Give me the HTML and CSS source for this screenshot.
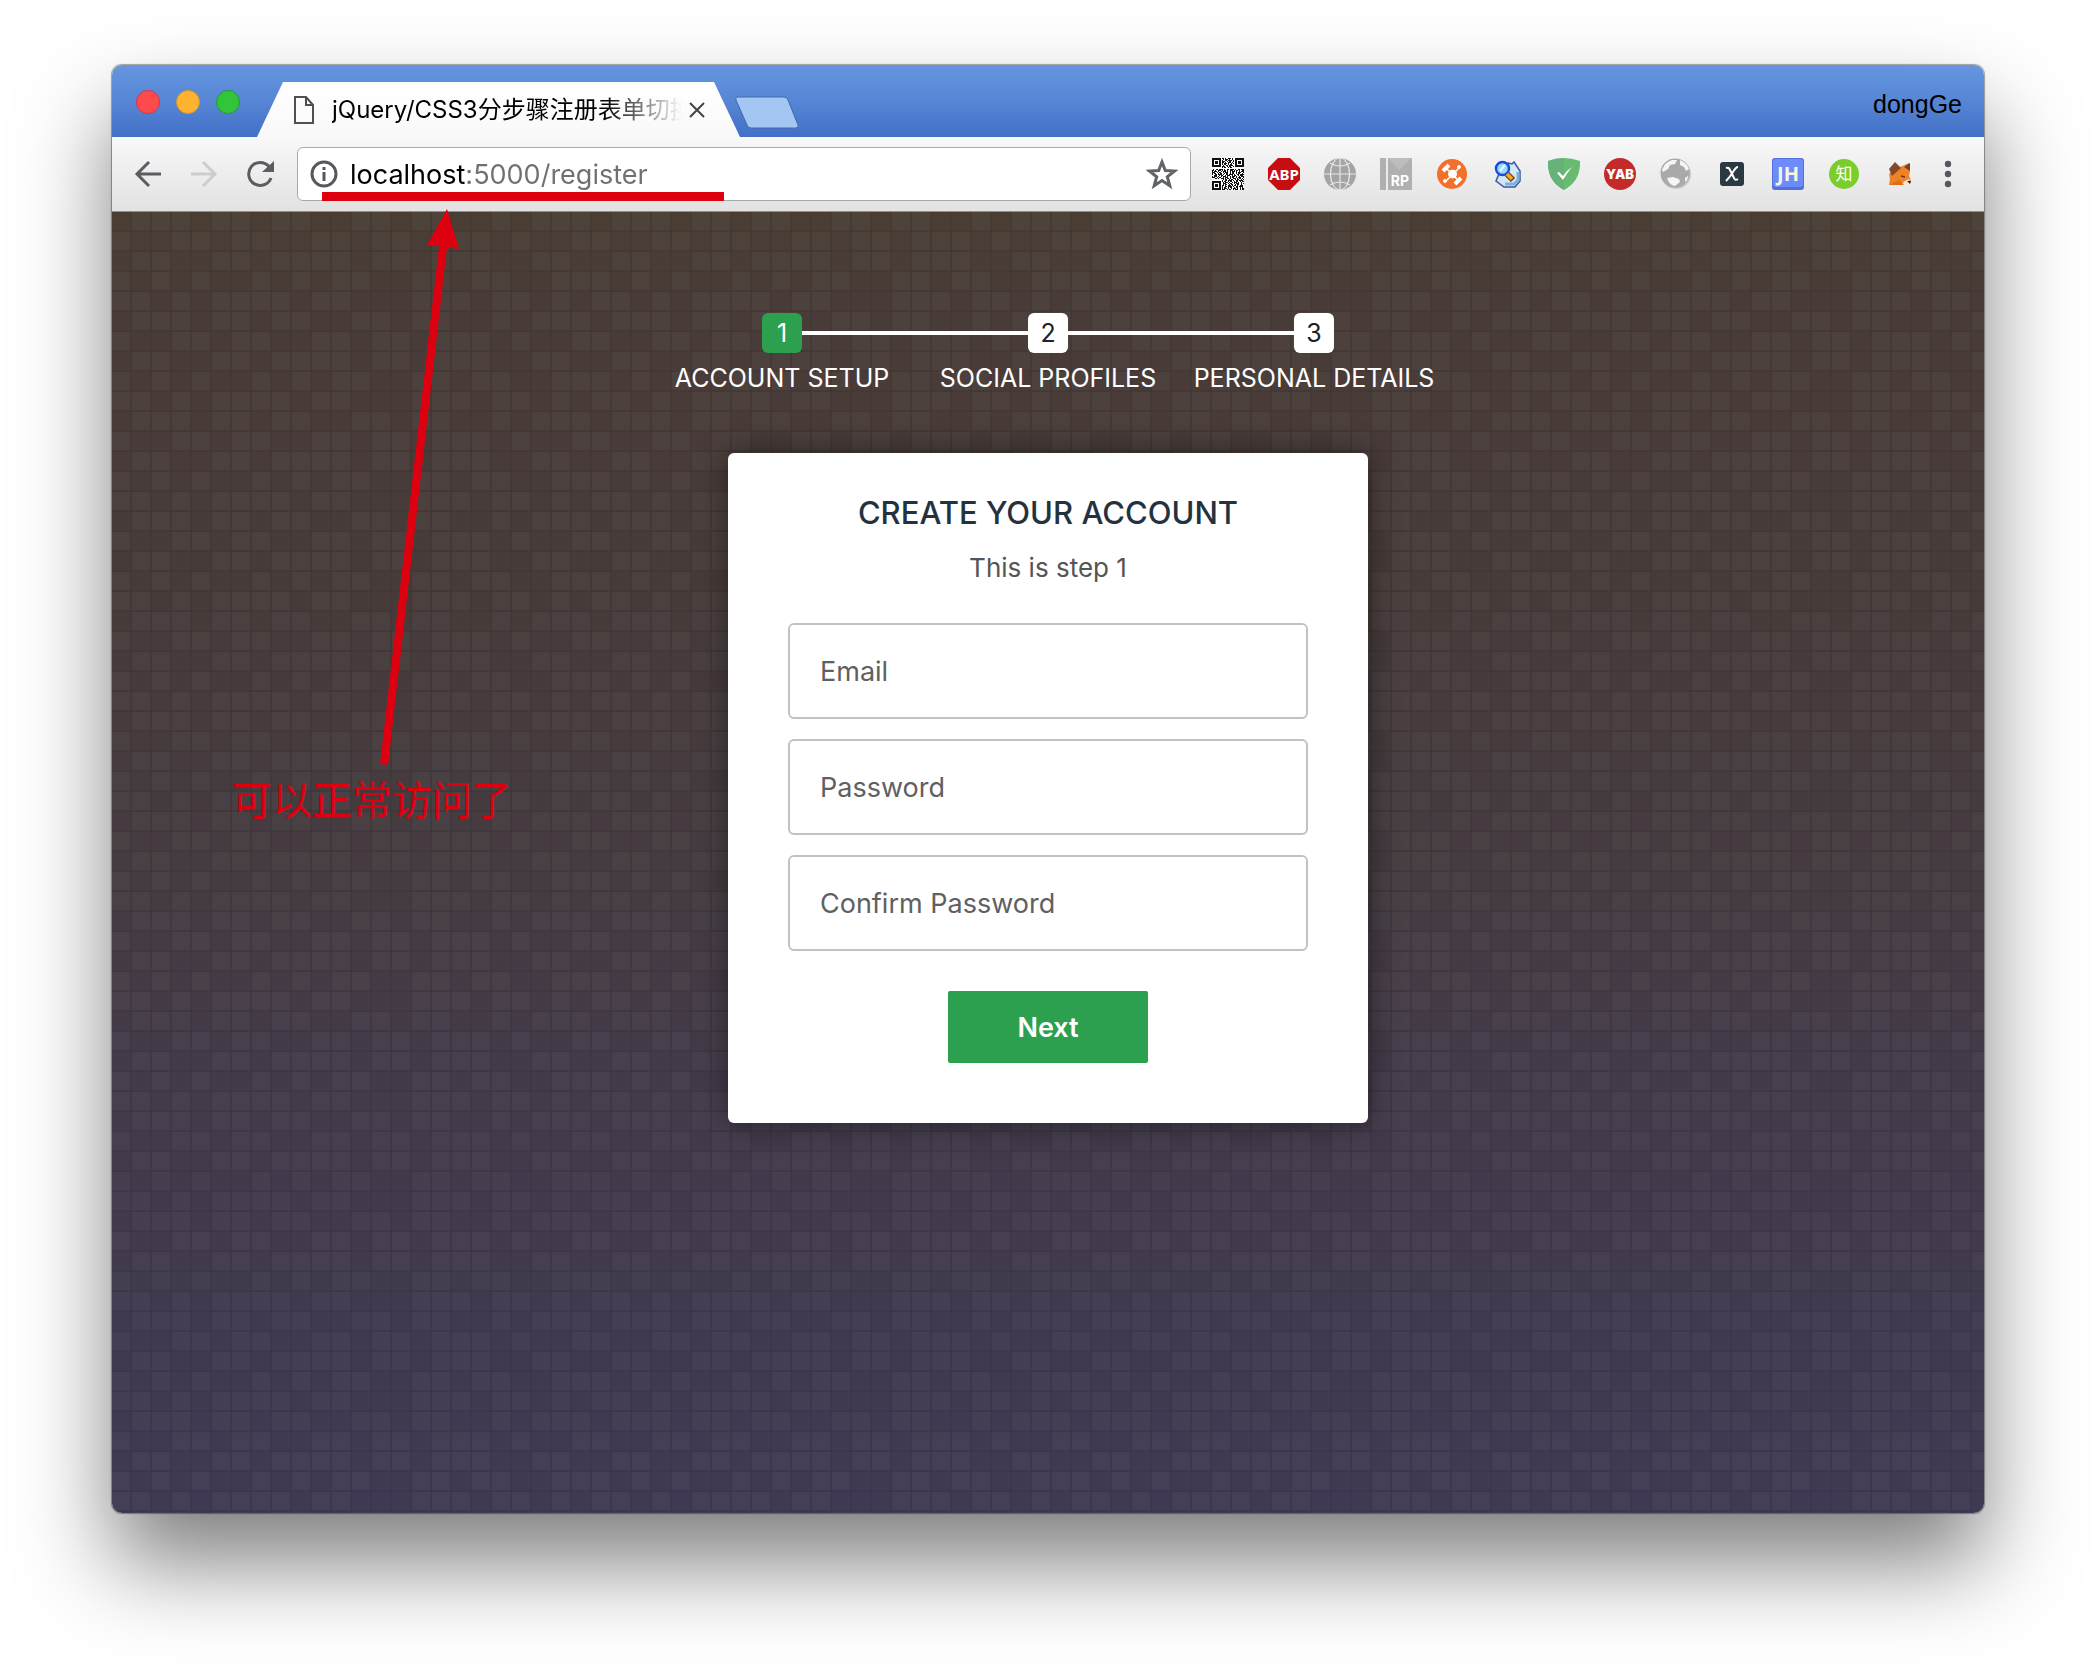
FILE: index.html
```html
<!DOCTYPE html>
<html lang="zh-CN">
<head>
<meta charset="utf-8">
<title>jQuery/CSS3分步骤注册表单切换</title>
<link rel="stylesheet" href="styles.css">
</head>
<body>
<div class="window">
  <header class="titlebar">
    <div class="lights">
      <button class="light light-close" aria-label="Close window"></button>
      <button class="light light-min" aria-label="Minimize window"></button>
      <button class="light light-max" aria-label="Zoom window"></button>
    </div>
    <div class="tab">
      <svg class="tab-icon" width="20" height="28" viewBox="0 0 20 28" fill="none" stroke="#505050" stroke-width="2"><path d="M1 1h11l7 8v18H1zM12 1v8h7"/></svg>
      <span class="tab-title">jQuery/CSS3分步骤注册表单切换</span>
      <button class="tab-close" aria-label="Close tab"><svg width="16" height="16" viewBox="0 0 16 16" stroke="#444" stroke-width="2"><path d="M1 1l14 14M15 1L1 15"/></svg></button>
    </div>
    <button class="new-tab" aria-label="New tab"><svg width="66" height="34" viewBox="0 0 66 34"><path d="M3 1h47q3 0 4 3l10 25q1 3-2 3H17q-3 0-4-3L2 4q-1-3 1-3z" fill="#a3c7f2" stroke="#4069ab"/></svg></button>
    <span class="profile">dongGe</span>
  </header>

  <nav class="toolbar">
    <div class="nav-buttons">
      <button class="icon" aria-label="Back"><svg width="32" height="32" viewBox="0 0 32 32" fill="none" stroke="#5a5d61" stroke-width="3"><path d="M29 16H7M17 4L5 16l12 12"/></svg></button>
      <button class="icon" aria-label="Forward"><svg width="32" height="32" viewBox="0 0 32 32" fill="none" stroke="#cdcdcd" stroke-width="3"><path d="M3 16h22M15 4l12 12-12 12"/></svg></button>
      <button class="icon" aria-label="Reload"><svg width="32" height="32" viewBox="0 0 32 32" fill="none" stroke="#5a5d61" stroke-width="3"><path d="M27 20A11.500 11.500 0 1 1 25 8.500"/><path d="M30 3v11H18z" fill="#5a5d61" stroke="none"/></svg></button>
    </div>
    <div class="omnibox">
      <svg width="28" height="28" viewBox="0 0 28 28" fill="none" stroke="#55585c" stroke-width="3"><circle cx="14" cy="14" r="12"/><path d="M14 12v9M14 7v3"/></svg>
      <input class="url" type="text" aria-label="Address" value="localhost:5000/register">
      <button class="star" aria-label="Bookmark this page"><svg width="32" height="32" viewBox="0 0 32 32"><path d="M16 4l3.300 8.500 9.200.500-7.200 5.700 2.500 9L16 22.600l-7.800 5.100 2.500-9L3.500 13l9.200-.500z" fill="none" stroke="#5f6266" stroke-width="3"/></svg></button>
    </div>
    <div class="extensions">
      <button class="icon" aria-label="QR code"><svg width="32" height="32" viewBox="0 0 32 32"><path fill="#fff" d="M0 0h32v32H0z"/><g stroke="#111" stroke-width="1"><path stroke-dasharray="2 1 1 2 3 1 1 1" d="M10 .5h12M10 4.500h12M0 12.500h32M3 20.500h29M10 27.500h22"/><path stroke-dasharray="1 1 3 1 1 2" d="M11 1.500h10M10 5.500h12M0 13.500h32M0 18.500h32M11 24.500h20M10 30.500h22"/><path stroke-dasharray="1 2 2 1 4 1" d="M10 2.500h12M11 7.500h11M1 11.500h31M0 16.500h32M10 22.500h22M10 28.500h22"/><path stroke-dasharray="3 2 1 1 2 2 1 1" d="M10 3.500h12M10 8.500h12M0 14.500h32M2 17.500h30M0 19.500h32M11 25.500h21M10 31.500h22"/><path stroke-dasharray="1 1 2 2" d="M10 6.500h12M10 9.500h12M0 15.500h32M11 21.500h21M10 23.500h22M11 26.500h20M10 29.500h21"/></g><g fill="none" stroke="#111" stroke-width="2"><path d="M1 1h7v7H1zM24 1h7v7h-7zM1 24h7v7H1z"/></g><path fill="#111" d="M3 3h3v3H3zM26 3h3v3h-3zM3 26h3v3H3z"/></svg></button>
      <button class="icon" aria-label="Adblock Plus"><svg width="32" height="32" viewBox="0 0 32 32"><path d="M10 0h12l10 10v12L22 32H10L0 22V10z" fill="#c70d12"/><text x="16" y="22" class="glyph glyph-abp">ABP</text></svg></button>
      <button class="icon" aria-label="Globe"><svg width="32" height="32" viewBox="0 0 32 32"><circle cx="16" cy="16" r="16" fill="#a4a4a4"/><g fill="none" stroke="#e6e6e6" stroke-width="1.200"><path d="M16 0v32M0 16h32M6 5q10 6 20 0M6 27q10-6 20 0"/><ellipse cx="16" cy="16" rx="9.500" ry="16"/></g></svg></button>
      <button class="icon" aria-label="RP"><svg width="32" height="32" viewBox="0 0 32 32"><rect width="32" height="32" rx="1" fill="#b0b0b0"/><path d="M8 0l11 12L32 0z" fill="#bdbdbd"/><path d="M6 0h2v32H6z" fill="#ececec"/><text x="20" y="28" class="glyph glyph-rp">RP</text></svg></button>
      <button class="icon" aria-label="Helper"><svg width="32" height="32" viewBox="0 0 32 32"><circle cx="16" cy="16" r="15" fill="#f3702b"/><g stroke="#fff" fill="#fff"><circle cx="16.500" cy="16" r="4"/><path stroke-width="1.500" d="M10 10l13 13M23 10L10 23"/><path stroke-width="4" d="M7 13l6-6M19 26l6-6"/><circle cx="23" cy="9" r="1.500"/><circle cx="9" cy="23" r="1.500"/></g></svg></button>
      <button class="icon" aria-label="Search"><svg width="32" height="32" viewBox="0 0 32 32"><path d="M16 5l4 1 2-2 6 9v10l-5 6H12l-8-6 3-7z" fill="#d3e6f3" stroke="#3b57a6" stroke-width="1.500"/><path d="M26 14v8l-4 4h-9" fill="none" stroke="#7fb0dc" stroke-width="3"/><circle cx="10.500" cy="10.500" r="6.500" fill="#93dbff" stroke="#2148dc" stroke-width="2.500"/><path d="M8 13l5-6" stroke="#e9fbff" stroke-width="2"/><path d="M15 16l6 6" stroke="#7a3a08" stroke-width="6"/><path d="M15 16l5 5" stroke="#f9a81c" stroke-width="3.500"/></svg></button>
      <button class="icon" aria-label="AdGuard"><svg width="32" height="32" viewBox="0 0 32 32"><path d="M16 0Q8 0 0 3q-1 20 16 29Q33 23 32 3 24 0 16 0z" fill="#68bc71"/><path d="M16 0Q8 0 0 3q-1 20 16 29z" fill="#67b279"/><path d="M9 15l2-1 4 4q4-6 9-9-5 6-9 13z" fill="#fff"/></svg></button>
      <button class="icon" aria-label="YAB"><svg width="32" height="32" viewBox="0 0 32 32"><circle cx="16" cy="16" r="16" fill="#c52a2a"/><text x="16" y="21" class="glyph glyph-yab">YAB</text></svg></button>
      <button class="icon" aria-label="World"><svg width="32" height="32" viewBox="0 0 32 32"><circle cx="16" cy="16" r="15" fill="#c4c4c4"/><circle cx="15" cy="15" r="14.500" fill="#a9a9a9"/><path d="M2 12q3-8 10-10l5 0-2 4-5 1-2 4-5 3zM20 2q7 3 9 9l-3 2-2-4-4-2zM7 20l6-1 6 2 1 3-5 4q-6-1-8-8zM25 20l3-2q0 4-3 6z" fill="#f5f5f5"/></svg></button>
      <button class="icon" aria-label="X"><svg width="32" height="32" viewBox="0 0 32 32"><rect x="4" y="4" width="24" height="24" rx="3" fill="#2b3a42"/><path d="M10 10q3-1 4 2l4 8q1 3 4 1M22 9q-2 0-5 5t-7 9" fill="none" stroke="#fff" stroke-width="2"/></svg></button>
      <button class="icon" aria-label="JH"><svg width="32" height="32" viewBox="0 0 32 32"><rect width="32" height="32" rx="3" fill="#526fdc"/><rect x="1" y="1" width="30" height="28" rx="3" fill="#6d8cfb"/><text x="16" y="23" class="glyph glyph-jh">JH</text></svg></button>
      <button class="icon" aria-label="知乎"><svg width="32" height="32" viewBox="0 0 32 32"><circle cx="16" cy="16" r="15" fill="#7bcd2c"/><text x="16" y="22" class="glyph glyph-zhi">知</text></svg></button>
      <button class="icon" aria-label="MetaMask"><svg width="32" height="32" viewBox="0 0 32 32"><path d="M7 14l9-5 9-4 1 8-1 5 2 5-4 3-5-1-3 2H5l1-6-1-5z" fill="#ee8326"/><path d="M11 4l6 6-9 8-3-7z" fill="#85492a"/><path d="M26 5v8l-6-4z" fill="#70412a"/><path d="M5 27l10-5 5 5z" fill="#e06c1c"/><path d="M19 24l6-3 1 5-5 1z" fill="#f5e7d8"/><path d="M23 23h4l-1 3z" fill="#222"/><path d="M17 18l4 1" stroke="#633" stroke-width="1.500"/></svg></button>
    </div>
    <button class="icon menu" aria-label="Menu"><svg width="32" height="32" viewBox="0 0 32 32" fill="#55585c"><circle cx="16" cy="6" r="3.200"/><circle cx="16" cy="16" r="3.200"/><circle cx="16" cy="26" r="3.200"/></svg></button>
  </nav>

  <main class="page">
    <ol class="progress">
      <li class="step step-active"><span class="step-number">1</span><span class="step-label">ACCOUNT SETUP</span></li>
      <li class="step"><span class="step-number">2</span><span class="step-label">SOCIAL PROFILES</span></li>
      <li class="step"><span class="step-number">3</span><span class="step-label">PERSONAL DETAILS</span></li>
    </ol>
    <form class="card">
      <h2 class="card-title">CREATE YOUR ACCOUNT</h2>
      <h3 class="card-subtitle">This is step 1</h3>
      <div class="fields">
        <input class="field" type="text" placeholder="Email" aria-label="Email">
        <input class="field" type="password" placeholder="Password" aria-label="Password">
        <input class="field" type="password" placeholder="Confirm Password" aria-label="Confirm Password">
      </div>
      <button class="next" type="button">Next</button>
    </form>
  </main>

  <svg class="callout" width="420" height="600" viewBox="0 0 420 600" fill="#dd000f"><path d="M10 2h402v9H10zM135 19l-20 36 12 1L68 574l8 1 59-518 12 2z"/></svg>
  <p class="callout-text">可以正常访问了</p>
</div>
</body>
</html>
```
FILE: styles.css
```css
* {
  box-sizing: border-box;
}

body {
  margin: 0;
  padding: 65px 112px 159px;
  min-height: 100vh;
  display: flex;
  background: #fff;
  font-family: Inter, "Noto Sans CJK SC", sans-serif;
}

button {
  padding: 0;
  border: 0;
  background: none;
  font: inherit;
}

svg {
  display: block;
}

.window {
  position: relative;
  flex: 1;
  display: flex;
  flex-direction: column;
  border-radius: 10px;
  box-shadow: 0 0 1px 1px rgba(0, 0, 0, 0.35), 0 50px 90px rgba(0, 0, 0, 0.5);
}

/* Title bar and tabs */

.titlebar {
  display: flex;
  align-items: flex-end;
  height: 72px;
  padding: 0 22px 0 24px;
  border-radius: 10px 10px 0 0;
  background: linear-gradient(#6596de, #5686d5 50%, #4370c7);
}

.lights {
  display: flex;
  gap: 16px;
  margin-right: 17px;
  padding-bottom: 23px;
}

.light {
  width: 24px;
  height: 24px;
  border: 1px solid;
  border-radius: 50%;
}

.light-close {
  background: #fc4a4d;
  border-color: #d9353d;
}

.light-min {
  background: #fdb32f;
  border-color: #d6932a;
}

.light-max {
  background: #32c53a;
  border-color: #229b33;
}

.tab {
  display: flex;
  align-items: center;
  width: 483px;
  height: 55px;
  padding: 0 35px 0 37px;
  background: linear-gradient(#fff, #f9f9f9);
  clip-path: polygon(0 100%, 26px 0, calc(100% - 26px) 0, 100% 100%);
}

.tab-title {
  flex: 1;
  margin: 0 7px 0 18px;
  overflow: hidden;
  white-space: nowrap;
  font-size: 24px;
  line-height: 36px;
  color: #000;
  mask-image: linear-gradient(90deg, #000 78%, transparent);
}

.new-tab {
  margin: 0 auto 7px -6px;
}

.profile {
  font-family: "Liberation Sans", sans-serif;
  font-size: 25px;
  line-height: 28px;
  padding-bottom: 19px;
  color: #000;
}

/* Toolbar */

.toolbar {
  display: flex;
  align-items: center;
  height: 75px;
  padding: 0 20px;
  background: linear-gradient(#f8f8f8, #e2e2e2);
  border-bottom: 1px solid #8f8f8f;
}

.nav-buttons,
.extensions {
  display: flex;
  gap: 24px;
}

.icon {
  width: 32px;
  height: 32px;
}

.omnibox {
  flex: 1;
  display: flex;
  align-items: center;
  height: 54px;
  margin: 0 21px;
  padding: 0 12px;
  border: 1px solid #a9a9a9;
  border-radius: 6px;
  background: #fff;
}

.url {
  flex: 1;
  min-width: 0;
  margin: 0 12px;
  padding: 2px 0 0;
  border: 0;
  outline: 0;
  font-family: Inter, sans-serif;
  font-size: 27px;
  line-height: 36px;
  color: transparent;
  background: linear-gradient(90deg, #000 115px, #707070 115px);
  -webkit-background-clip: text;
  background-clip: text;
}

.menu {
  margin-left: 16px;
}

.glyph {
  fill: #fff;
  text-anchor: middle;
  font-weight: 700;
}

.glyph-abp {
  font-family: "Noto Sans", sans-serif;
  font-size: 15px;
}

.glyph-rp {
  font-family: Inter, sans-serif;
  font-size: 14px;
}

.glyph-yab {
  font-family: Inter, sans-serif;
  font-size: 13px;
  font-weight: 900;
}

.glyph-jh {
  font-family: "Noto Sans", sans-serif;
  font-size: 20px;
  fill: #f6f6e0;
}

.glyph-zhi {
  font-family: "Noto Sans CJK SC", sans-serif;
  font-size: 17px;
  font-weight: 400;
}

/* Registration page */

.page {
  flex: 1;
  display: flex;
  flex-direction: column;
  align-items: center;
  padding: 101px 0;
  border-radius: 0 0 10px 10px;
  background:
    url("data:image/svg+xml,%3Csvg xmlns='http://www.w3.org/2000/svg' width='480' height='100' fill='none' stroke='white' stroke-opacity='.024' stroke-width='18'%3E%3Cpath d='M20 9h18m2 0h18m2 0h18m22 0h18m2 0h18m22 0h18m2 0h18m42 0h18m2 0h18m22 0h18m2 0h18m42 0h18m22 0h18m2 0h18m2 0h18M0 29h18m42 0h18m2 0h18m22 0h18m2 0h18m42 0h18m2 0h18m22 0h18m2 0h18m22 0h18m2 0h18m2 0h18m22 0h18m42 0h18M20 49h18m2 0h18m42 0h18m2 0h18m22 0h18m2 0h18m2 0h18m2 0h18m22 0h18m2 0h18m22 0h18m2 0h18m2 0h18m42 0h18m2 0h18M0 69h18m22 0h18m22 0h18m42 0h18m22 0h18m22 0h18m2 0h18m42 0h18m2 0h18m22 0h18m2 0h18m42 0h18m2 0h18M0 89h18m2 0h18m22 0h18m22 0h18m2 0h18m2 0h18m2 0h18m22 0h18m2 0h18m62 0h18m2 0h18m2 0h18m22 0h18m2 0h18m22 0h18'/%3E%3C/svg%3E"),
    repeating-linear-gradient(90deg, transparent 0 18px, rgba(0, 0, 0, 0.05) 18px 20px),
    repeating-linear-gradient(transparent 0 18px, rgba(0, 0, 0, 0.05) 18px 20px),
    linear-gradient(#4a3e34, #493c38 6%, #473b3a 30%, #453b41 50%, #433a4b 70%, #41394f 88%, #403954);
}

.progress {
  display: grid;
  grid-template-columns: repeat(3, 266px);
  margin: 0 0 50px;
  padding: 0;
  list-style: none;
}

.step {
  position: relative;
  display: flex;
  flex-direction: column;
  align-items: center;
  color: #fff;
}

.step + .step::before {
  content: "";
  position: absolute;
  top: 18px;
  right: 50%;
  width: 100%;
  height: 4px;
  background: #fff;
}

.step-number {
  position: relative;
  z-index: 1;
  width: 40px;
  border-radius: 6px;
  background: #fff;
  color: #222;
  font-size: 25px;
  line-height: 40px;
  text-align: center;
}

.step-active .step-number {
  background: #2ca04f;
  color: #fff;
}

.step-label {
  font-size: 25px;
  line-height: 50px;
  white-space: nowrap;
}

.card {
  display: flex;
  flex-direction: column;
  align-items: center;
  width: 640px;
  padding: 40px 60px 60px;
  border-radius: 6px;
  background: #fff;
  box-shadow: 0 0 30px 2px rgba(0, 0, 0, 0.4);
}

.card-title {
  margin: 0 0 20px;
  font-size: 31px;
  font-weight: 500;
  line-height: 40px;
  color: #23323f;
}

.card-subtitle {
  margin: 0 0 40px;
  font-size: 26px;
  font-weight: 400;
  line-height: 30px;
  color: #555;
}

.fields {
  display: flex;
  flex-direction: column;
  gap: 20px;
  align-self: stretch;
}

.field {
  height: 96px;
  padding: 0 30px;
  border: 2px solid #c2c2c2;
  border-radius: 6px;
  font-family: Inter, sans-serif;
  font-size: 27px;
  color: #2c3e50;
}

.field::placeholder {
  color: #606060;
}

.next {
  width: 200px;
  height: 72px;
  margin-top: 40px;
  border-radius: 2px;
  background: #2ca04f;
  color: #fff;
  font-size: 27px;
  font-weight: 600;
}

/* Callout drawn over the window */

.callout {
  position: absolute;
  top: 125px;
  left: 200px;
  pointer-events: none;
}

.callout-text {
  position: absolute;
  top: 703px;
  left: 120px;
  margin: 0;
  font-family: "Noto Sans CJK SC", sans-serif;
  font-size: 40px;
  font-weight: 400;
  line-height: 60px;
  color: #dd000f;
}
```
